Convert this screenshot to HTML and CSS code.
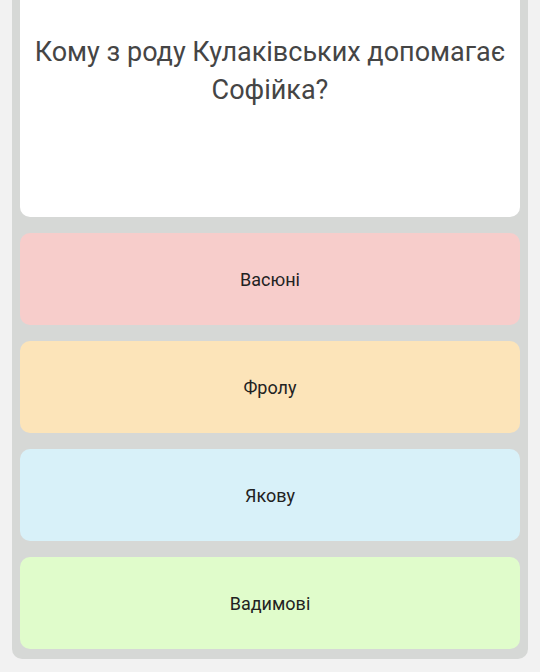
FILE: index.html
```html
<!DOCTYPE html>
<html lang="uk">
<head>
<meta charset="UTF-8">
<meta name="viewport" content="width=device-width, initial-scale=1.0">
<title>Питання</title>
<link rel="stylesheet" href="styles.css">
</head>
<body>
<div class="quiz">
    <div class="question">
        <p>Кому з роду Кулаківських допомагає Софійка?</p>
    </div>
    <div class="answer red">Васюні</div>
    <div class="answer orange">Фролу</div>
    <div class="answer blue">Якову</div>
    <div class="answer green">Вадимові</div>
</div>
</body>
</html>
```

FILE: styles.css
```css
body {
    margin: 0;
    padding: 0;
    background-color: #f2f2f2;
    font-family: Roboto, "Noto Sans", sans-serif;
}

.quiz {
    margin: 0 12px;
    padding: 0 8px 10px;
    background-color: #d6d8d6;
    border-radius: 0 0 10px 10px;
    display: flex;
    flex-direction: column;
    gap: 16px;
}

.question {
    background-color: #fff;
    border-radius: 0 0 10px 10px;
    height: 217px;
    padding: 33px 6px 0;
    box-sizing: border-box;
}
.question p {
    margin: 0;
    text-align: center;
    font-size: 27px;
    line-height: 38px;
    color: #454545;
}

.answer {
    height: 92px;
    border-radius: 10px;
    display: flex;
    justify-content: center;
    align-items: center;
    font-size: 18px;
    color: #222;
}
.red { background-color: #f7cdcb; }
.orange { background-color: #fce4b9; }
.blue { background-color: #d8f1f9; }
.green { background-color: #e0fccb; }
```
